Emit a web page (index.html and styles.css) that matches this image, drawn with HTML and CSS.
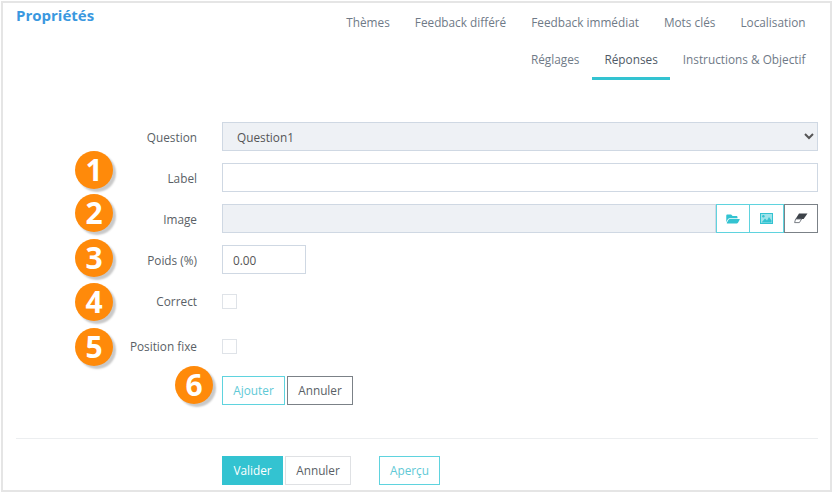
FILE: index.html
```html
<!DOCTYPE html>
<html lang="fr">
<head>
<meta charset="utf-8">
<title>Propriétés</title>
<link rel="stylesheet" href="styles.css">
</head>
<body>
<main class="card">
  <header class="head">
    <h1 class="title">Propriétés</h1>
    <nav class="tabs">
      <div class="tab-row">
        <a class="tab">Thèmes</a>
        <a class="tab">Feedback différé</a>
        <a class="tab">Feedback immédiat</a>
        <a class="tab">Mots clés</a>
        <a class="tab">Localisation</a>
      </div>
      <div class="tab-row">
        <a class="tab">Réglages</a>
        <a class="tab active">Réponses</a>
        <a class="tab">Instructions &amp; Objectif</a>
      </div>
    </nav>
  </header>

  <form class="form">
    <div class="row">
      <label class="label">Question</label>
      <select class="control select"><option>Question1</option></select>
    </div>
    <div class="row">
      <span class="badge b1">1</span>
      <label class="label">Label</label>
      <input class="control" type="text">
    </div>
    <div class="row">
      <span class="badge b2">2</span>
      <label class="label">Image</label>
      <div class="group">
        <input class="control readonly" type="text" readonly>
        <button type="button" class="icon-btn cyan">
          <svg width="14" height="12" viewBox="0 0 576 512"><path fill="#33c3d1" d="M572.694 292.093L500.27 416.248A63.997 63.997 0 0 1 444.989 448H45.025c-18.523 0-30.064-20.093-20.731-36.093l72.424-124.155A64 64 0 0 1 152 256h399.964c18.523 0 30.064 20.093 20.73 36.093zM152 224h328v-48c0-26.51-21.49-48-48-48H272l-64-64H48C21.49 64 0 85.49 0 112v278.046l69.077-118.418C86.214 242.25 118.044 224 152 224z"/></svg>
        </button>
        <button type="button" class="icon-btn cyan">
          <svg width="13" height="11" viewBox="0 0 13 11"><rect x=".5" y=".5" width="12" height="10" fill="#9fe3ea" stroke="#33c3d1"/><circle cx="3.4" cy="3.2" r="1.2" fill="#33c3d1"/><path fill="#33c3d1" d="M1.5 9.5 L5 5.5 L7 7.5 L9 4 L11.5 7.5 V9.5 Z"/></svg>
        </button>
        <button type="button" class="icon-btn grey">
          <svg width="14" height="11" viewBox="0 0 14 11"><path fill="#3d4249" d="M5 .5 H13.5 L9.6 6 H1.6 Z"/><path fill="#fff" stroke="#6b7178" stroke-width=".9" d="M1.6 6 H7.6 L5.4 9.6 H.6 Z"/></svg>
        </button>
      </div>
    </div>
    <div class="row">
      <span class="badge b3">3</span>
      <label class="label">Poids (%)</label>
      <input class="control small" type="text" value="0.00">
    </div>
    <div class="row row-check first-check">
      <span class="badge b4">4</span>
      <label class="label">Correct</label>
      <span class="check"></span>
    </div>
    <div class="row row-check second-check">
      <span class="badge b5">5</span>
      <label class="label">Position fixe</label>
      <span class="check"></span>
    </div>
    <div class="row actions">
      <span class="badge b6">6</span>
      <span class="label"></span>
      <div class="buttons">
        <button type="button" class="btn btn-cyan add">Ajouter</button>
        <button type="button" class="btn btn-grey cancel">Annuler</button>
      </div>
    </div>
  </form>

  <footer class="foot">
    <span class="label"></span>
    <button type="button" class="btn btn-primary">Valider</button>
    <button type="button" class="btn btn-light">Annuler</button>
    <button type="button" class="btn btn-cyan preview">Aperçu</button>
  </footer>
</main>
</body>
</html>
```
FILE: styles.css
```css
* { box-sizing: border-box; }
html, body { margin: 0; padding: 0; background: #fff; }
body {
  width: 833px;
  height: 493px;
  overflow: hidden;
  font-family: "Open Sans", sans-serif;
  font-size: 11.8px;
  color: #555;
}
.card {
  margin: 1px 0 0 1px;
  width: 831px;
  height: 491px;
  border: 2px solid #e5e5e5;
  padding: 0 12px 0 13px;
  display: flex;
  flex-direction: column;
}
.head {
  display: flex;
  justify-content: space-between;
  align-items: flex-start;
  height: 119px;
}
.title {
  margin: 1px 0 0;
  font-size: 15px;
  line-height: 22px;
  font-weight: 700;
  color: #3a98df;
}
.tabs { display: flex; flex-direction: column; align-items: flex-end; }
.tab-row { display: flex; height: 37px; }
.tab-row + .tab-row { height: 40px; }
.tab {
  display: block;
  padding: 1px 12.5px 0;
  line-height: 36px;
  color: #6f7a87;
  white-space: nowrap;
}
.tab-row + .tab-row .tab { padding-top: 0; line-height: 38px; height: 38px; }
.tab-row + .tab-row .tab.active {
  color: #4f5a66;
  border-bottom: 3px solid #33c3d1;
  height: 40px;
  padding: 0 12.5px;
}
.form { display: flex; flex-direction: column; gap: 12px; }
.row { position: relative; display: flex; align-items: center; height: 29px; }
.label {
  flex: none;
  width: 181px;
  margin-right: 25px;
  text-align: right;
  color: #5a5f66;
}
.row-check .label { padding-bottom: 2px; }
.control {
  display: block;
  flex: 1;
  min-width: 0;
  width: 100%;
  height: 29px;
  border: 1px solid #cfd8e3;
  background: #fff;
  padding: 0 10px;
  font: inherit;
  color: #555;
  outline: none;
  border-radius: 0;
}
.select { background: #eef1f5; padding: 0 10px; }
.readonly { background: #eef1f5; }
.small { flex: none; width: 84px; }
.group { flex: 1; display: flex; min-width: 0; }
.icon-btn {
  flex: none;
  width: 34px;
  height: 29px;
  padding: 0;
  background: #fff;
  display: flex;
  align-items: center;
  justify-content: center;
  border-radius: 0;
}
.cyan { border: 1px solid #5fd3de; }
.cyan + .cyan { border-left: 0; }
.grey { border: 1px solid #7b8187; }
.row-check { height: 15px; }
.first-check { margin-top: 8px; }
.second-check { margin-top: 18px; }
.check {
  width: 15px;
  height: 15px;
  border: 1px solid #dfe3e8;
  background: #fff;
}
.actions { margin-top: 10px; height: 29px; }
.buttons { display: flex; gap: 2px; }
.btn {
  height: 29px;
  padding: 0 0 1px;
  font: inherit;
  background: #fff;
  border-radius: 0;
}
.btn-cyan { border: 1px solid #5fd3de; color: #5fc9d6; }
.btn-grey { border: 1px solid #7b8187; color: #5a5f66; }
.btn-light { border: 1px solid #dfe1e4; color: #5a5f66; width: 66px; margin-left: 2px; }
.btn-primary { border: 1px solid #33c3d1; background: #33c3d1; color: #fff; width: 61px; }
.add { width: 63px; }
.cancel { width: 66px; }
.preview { width: 61px; margin-left: 28px; }
.foot {
  margin-top: 33px;
  border-top: 1px solid #eceef0;
  padding-top: 17px;
  display: flex;
  align-items: center;
}
.badge {
  position: absolute;
  left: 59px;
  width: 38px;
  height: 38px;
  border-radius: 50%;
  background: #ff8a0a;
  color: #fff;
  font-size: 30px;
  font-weight: 700;
  line-height: 38px;
  text-align: center;
  box-shadow: 3px 3px 2px #c9c9c9;
}
.b1 { top: -12px; }
.b2 { top: -10px; }
.b3 { top: -6px; }
.b4 { top: -11px; }
.b5 { top: -11px; }
.b6 { left: 159px; top: -10px; }
```
